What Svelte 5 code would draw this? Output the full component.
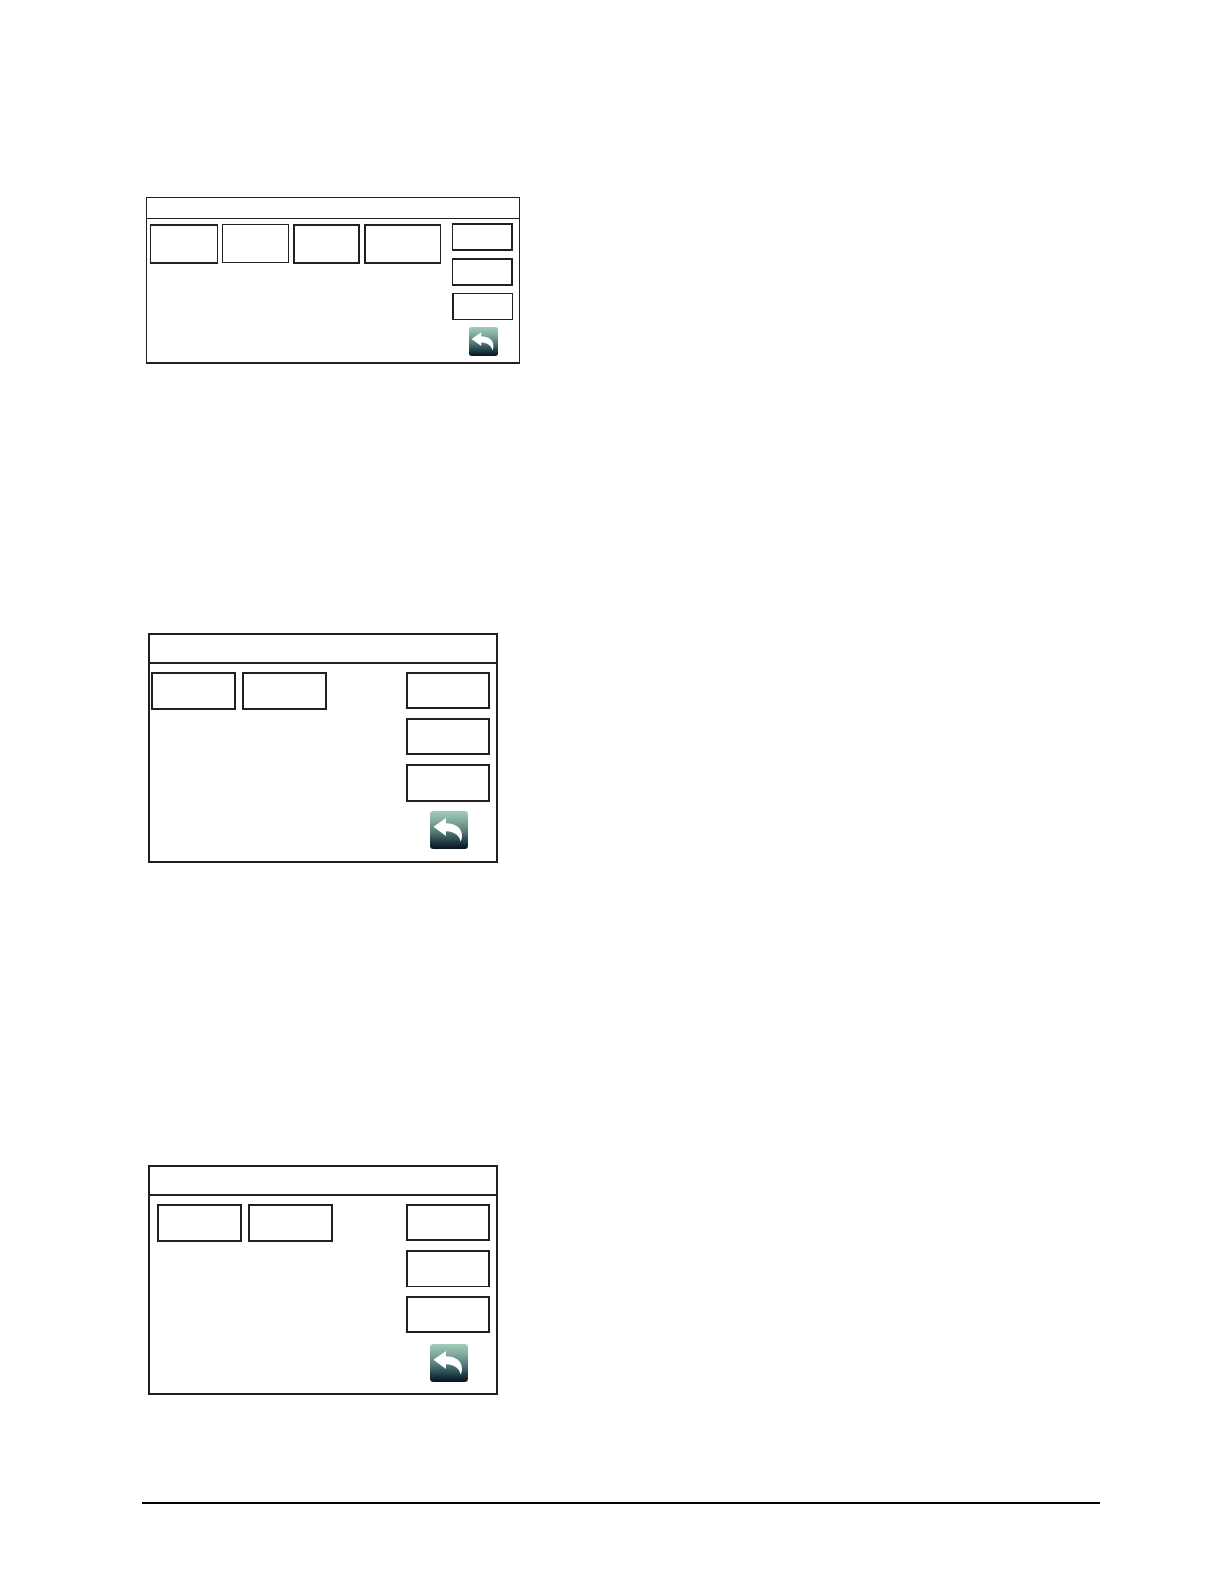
<script lang="ts">
	const screens = [
		{
			id: 'compact',
			name: 'Screen 1',
			tabs: ['flat', 'thin', 'bold', 'wide'],
			side: ['light-left', 'light-left', 'light']
		},
		{ id: 'medium', name: 'Screen 2', tabs: ['bold', 'bold'], side: ['bold', 'bold', 'bold tall'] },
		{ id: 'inset', name: 'Screen 3', tabs: ['bold', 'bold'], side: ['bold', 'light-bottom', 'bold'] }
	];
</script>

<main>
	{#each screens as screen}
		<section class="screen {screen.id}" aria-label={screen.name}>
			<header></header>
			<div class="body">
				<div class="tabs">
					{#each screen.tabs as kind, i}
						<button type="button" class="box {kind}" aria-label="Option {i + 1}"></button>
					{/each}
				</div>
				<div class="side">
					{#each screen.side as kind, i}
						<button type="button" class="box {kind}" aria-label="Action {i + 1}"></button>
					{/each}
					<button type="button" class="back" aria-label="Back">
						<svg viewBox="0 0 38 38" aria-hidden="true">
							<defs>
								<linearGradient id="back-{screen.id}" x1="0" y1="0" x2="0" y2="1">
									<stop offset="0" stop-color="#a0cdb9" />
									<stop offset="0.25" stop-color="#84ac9f" />
									<stop offset="0.55" stop-color="#527b79" />
									<stop offset="0.8" stop-color="#233f49" />
									<stop offset="1" stop-color="#0a1220" />
								</linearGradient>
							</defs>
							<rect width="38" height="38" rx="3.5" fill="url(#back-{screen.id})" />
							<path
								d="M3.4 15.8 16 7V12.2C25.5 12.2 32 17 32 24.5 32 27 31.4 29 30.6 30.8 29.8 25 25 20.4 16 20.2V25Z"
								fill="#fff"
							/>
						</svg>
					</button>
				</div>
			</div>
		</section>
	{/each}
</main>
<footer></footer>

<style>
	:global(body) {
		margin: 0;
		background: #fff;
	}

	main {
		padding: 197px 124px 107px 146px;
	}

	.screen {
		box-sizing: border-box;
		max-width: 350px;
		margin-left: 2px;
		border: 2px solid #231f20;
	}

	.screen header {
		height: 27px;
		border-bottom: 2px solid #231f20;
	}

	.body {
		display: flex;
		justify-content: space-between;
		align-items: flex-start;
		padding: 8px 6px 11px 1px;
	}

	.tabs {
		display: flex;
		align-items: flex-start;
		gap: 6px;
	}

	.side {
		display: flex;
		flex-direction: column;
		align-items: center;
		gap: 9px;
	}

	.box {
		box-sizing: border-box;
		width: 85px;
		height: 38px;
		padding: 0;
		border: 2px solid #231f20;
		background: #fff;
	}

	.side .box {
		width: 84px;
		height: 37px;
	}

	.side .tall {
		height: 38px;
	}

	.light-bottom {
		border-bottom-width: 1px;
	}

	.back {
		width: 38px;
		height: 38px;
		margin-left: 2px;
		padding: 0;
		border: 0;
		background: none;
	}

	.back svg {
		display: block;
		width: 100%;
		height: 100%;
	}

	.medium {
		margin-top: 269px;
	}

	.medium .body {
		padding-bottom: 12px;
	}

	.inset {
		margin-top: 302px;
	}

	.inset .body {
		padding-left: 7px;
	}

	.inset .back {
		margin-top: 2px;
	}

	/* the first screen is wider, lower and drawn with finer lines */
	.compact {
		max-width: 374px;
		margin-left: 0;
		border-width: 1px 1px 2px;
	}

	.compact header {
		height: 20px;
		border-bottom-width: 1px;
	}

	.compact .body {
		padding: 4px 6px 6px 3px;
	}

	.compact .tabs {
		gap: 4px;
		padding-top: 1px;
	}

	.compact .side {
		gap: 7px;
	}

	.compact .tabs .box {
		width: 67px;
		height: 40px;
	}

	.compact .tabs .wide {
		width: 77px;
		border-right-width: 1px;
	}

	.compact .tabs .flat {
		width: 68px;
		border-width: 2px 1px;
	}

	.compact .tabs .thin {
		height: 39px;
		border-width: 1px;
	}

	.compact .side .box {
		width: 61px;
		height: 28px;
	}

	.light-left {
		border-left-width: 1px;
	}

	.compact .side .light {
		height: 27px;
		border-width: 1px 1px 1px 2px;
	}

	.compact .back {
		width: 29px;
		height: 29px;
	}

	footer {
		margin: 0 124px 80px 142px;
		border-top: 2px solid #000;
	}
</style>
